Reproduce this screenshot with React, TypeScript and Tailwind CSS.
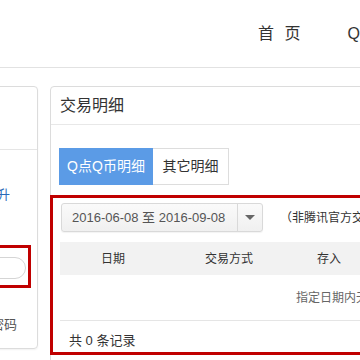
import React from "react";

export default function App() {
  const font = { fontFamily: '"Liberation Sans", "Noto Sans CJK SC", sans-serif' };
  return (
    <div className="relative w-[360px] h-[360px] overflow-hidden bg-white text-[#333]" style={font}>
      {/* header */}
      <div className="h-[68px] border-b border-[#e2e2e2] flex items-center">
        <div className="ml-[258px] shrink-0 whitespace-nowrap text-[16px] tracking-[3px] text-[#333] leading-none">首 页</div>
        <div className="ml-[44px] shrink-0 text-[16px] text-[#333] leading-none">Q</div>
      </div>

      <div className="flex pt-[18px] gap-[12px]">
        {/* left panel */}
        <div className="ml-[-200px] w-[238px] h-[263px] shrink-0 border border-[#dcdcdc] rounded-[4px] shadow-[0_1px_2px_rgba(0,0,0,0.06)] flex flex-col">
          <div className="h-[63px] border-b border-[#e5e5e5]" />
          <div className="flex justify-end pr-[27px] pt-[38px] text-[13px] text-[#2a6ab8] leading-none whitespace-nowrap">提升</div>
          <div className="mt-[56px] flex justify-end pr-[11px]">
            <div className="w-[140px] h-[22px] rounded-[11px] border border-[#d5d5d5] bg-white" />
          </div>
          <div className="mt-[39px] flex justify-end pr-[20px] text-[13px] text-[#555] leading-none whitespace-nowrap">忘记密码</div>
        </div>

        {/* right panel */}
        <div className="w-[360px] h-[280px] shrink-0 border border-[#dcdcdc] rounded-[4px] flex flex-col">
          <div className="h-[38px] border-b border-[#e8e8e8] flex items-center pl-[9px] text-[16px] text-[#333]">交易明细</div>
          <div className="flex pl-[8px] mt-[23px]">
            <div className="w-[94px] h-[37px] shrink-0 bg-[#5b9be6] text-white text-[14px] flex items-center justify-center whitespace-nowrap">Q点Q币明细</div>
            <div className="w-[76px] h-[37px] shrink-0 border border-l-0 border-[#dddddd] text-[14px] text-[#333] flex items-center justify-center whitespace-nowrap">其它明细</div>
          </div>
          <div className="flex items-center mt-[18px] pl-[10px]">
            <div className="w-[202px] h-[29px] shrink-0 rounded-[3px] border border-[#d9d9d9] bg-gradient-to-b from-[#fafafa] to-[#f0f0f0] flex items-center shadow-[0_1px_1px_rgba(0,0,0,0.05)]">
              <div className="flex-1 pl-[10px] text-[13px] text-[#555] leading-none whitespace-nowrap">2016-06-08 至 2016-09-08</div>
              <div className="w-[25px] h-full shrink-0 border-l border-[#d9d9d9] flex items-center justify-center">
                <div className="w-0 h-0 border-l-[5px] border-r-[5px] border-t-[5px] border-l-transparent border-r-transparent border-t-[#666]" />
              </div>
            </div>
            <div className="ml-[17px] shrink-0 text-[12px] text-[#333] whitespace-nowrap">（非腾讯官方交易记录）</div>
          </div>
          <div className="mt-[10px] ml-[9px] h-[33px] bg-[#f2f2f2] flex items-center text-[12px] text-[#333]">
            <div className="w-[106px] shrink-0 text-center">日期</div>
            <div className="w-[126px] shrink-0 text-center">交易方式</div>
            <div className="w-[74px] shrink-0 text-center">存入</div>
            <div className="w-[74px] shrink-0 text-center">支出</div>
          </div>
          <div className="ml-[9px] h-[46px] border-b border-[#e5e5e5] flex items-center pl-[236px] text-[12px] text-[#666] whitespace-nowrap">指定日期内无交易记录</div>
          <div className="pl-[18px] pt-[10px] text-[13px] text-[#333] whitespace-nowrap">共 0 条记录</div>
        </div>
      </div>

      {/* annotation boxes */}
      <div className="absolute left-[-10px] top-[245px] w-[41px] h-[43px] border-[3px] border-[#c00000]" />
      <div className="absolute left-[50px] top-[195px] w-[330px] h-[160px] border-[3px] border-[#c00000]" />
    </div>
  );
}
